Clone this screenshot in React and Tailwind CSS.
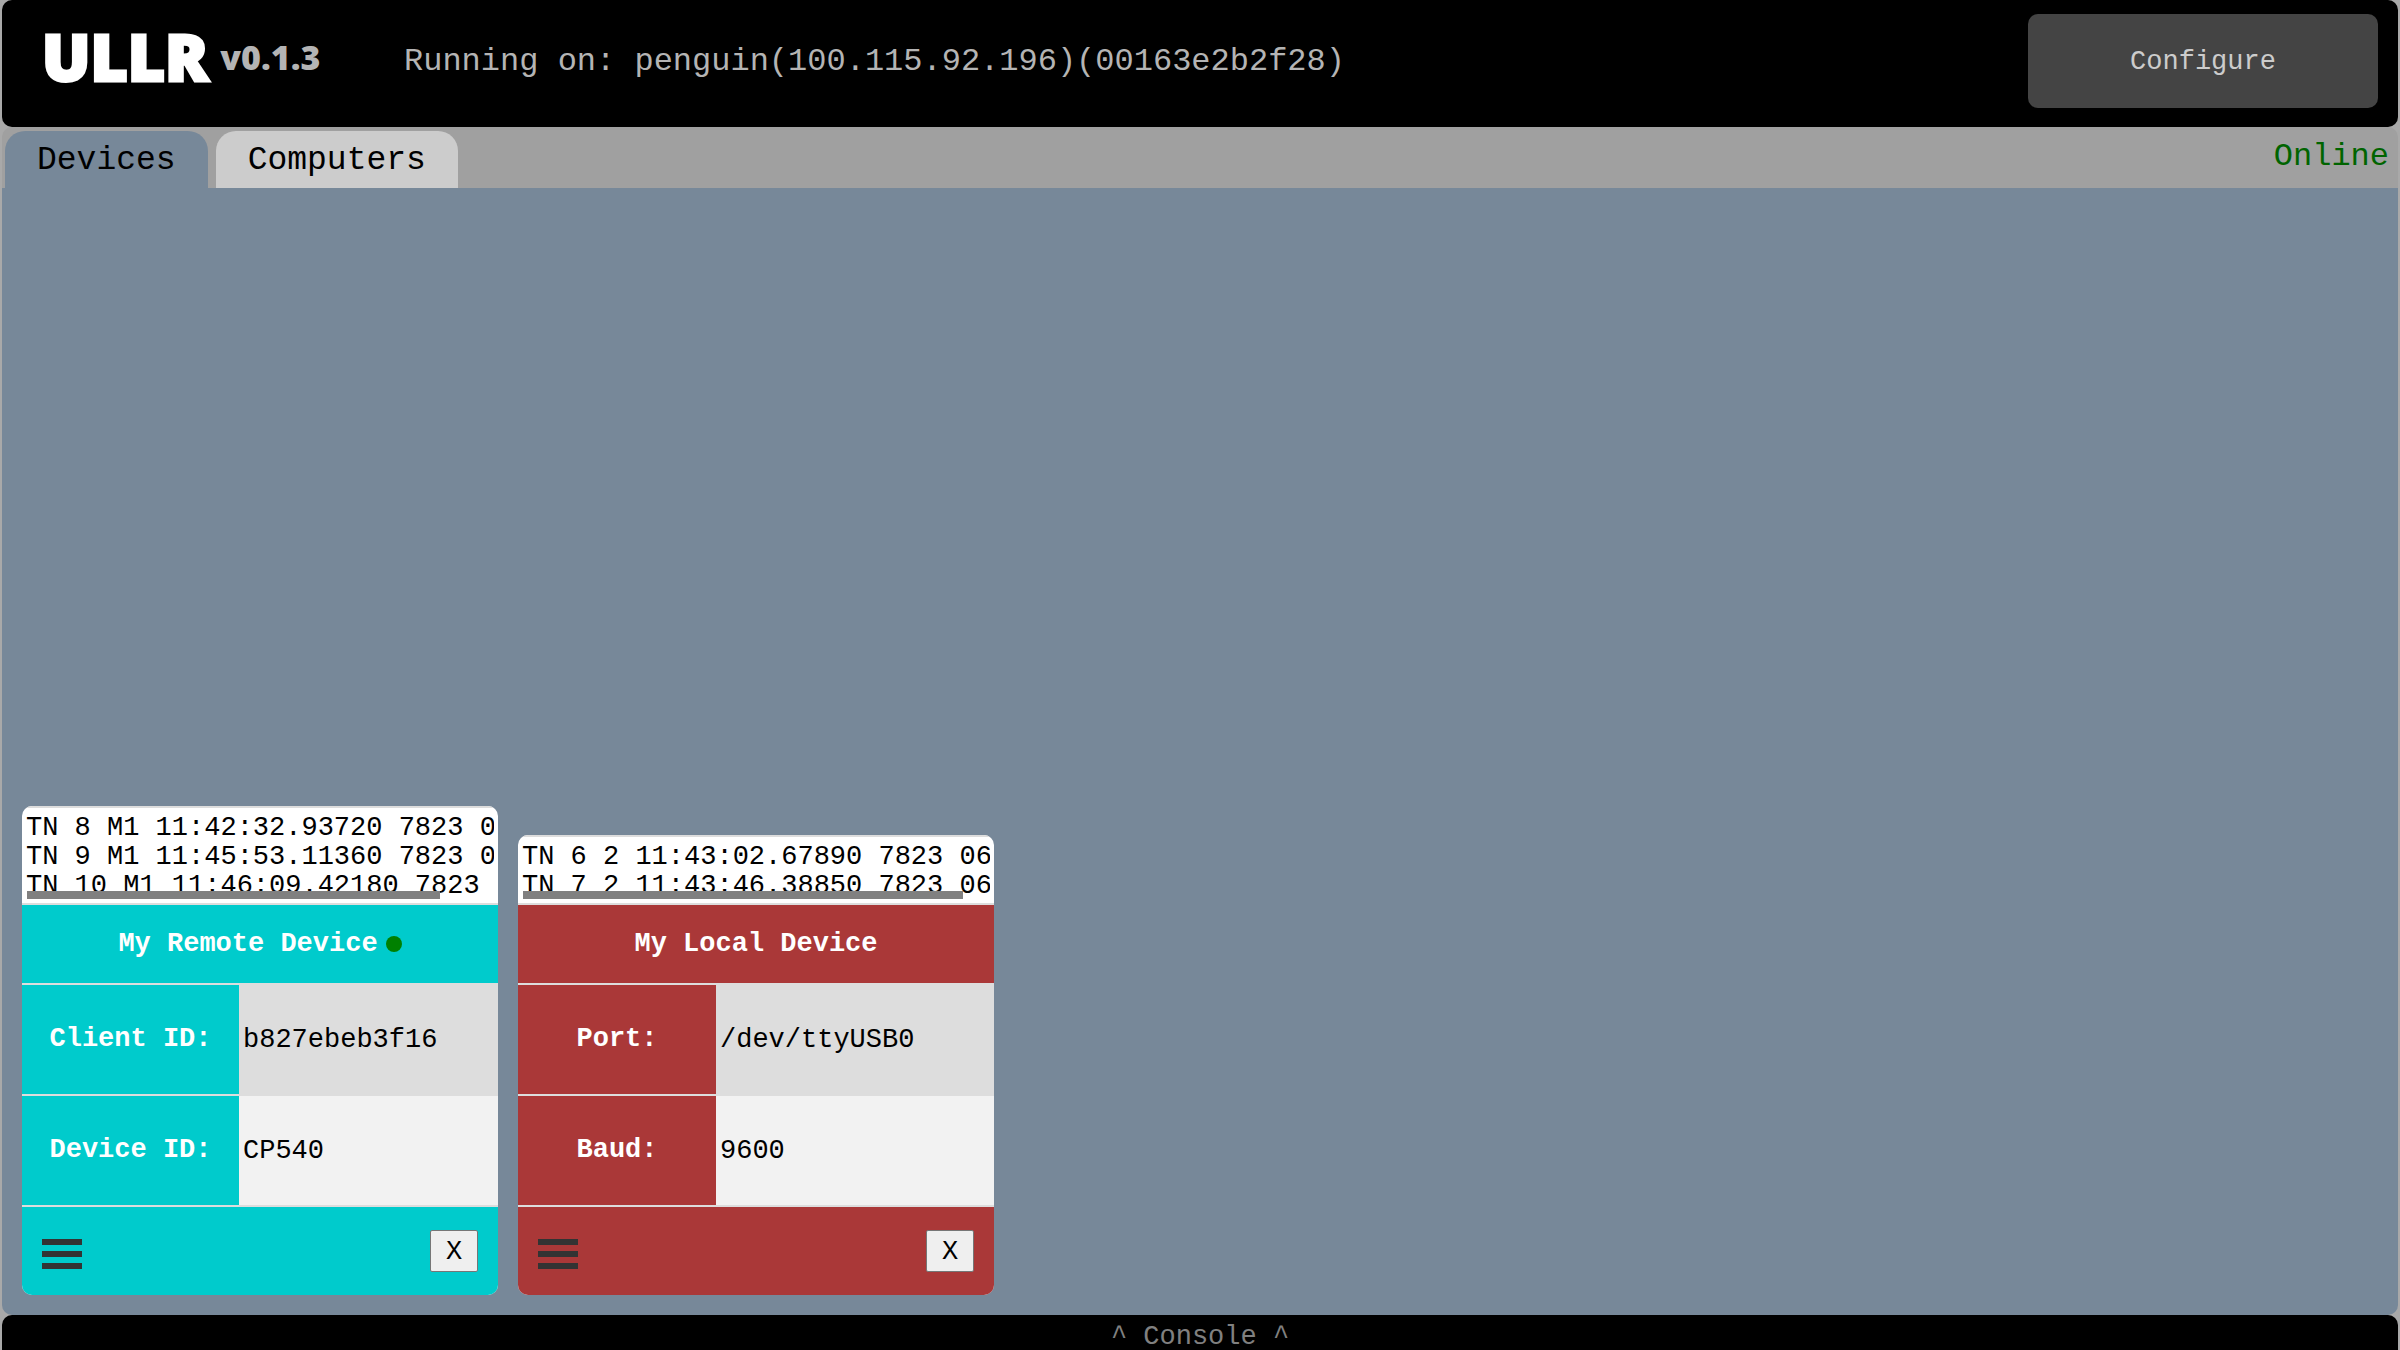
import { useState } from "react";

const devices = [
  {
    name: "My Remote Device",
    online: true,
    color: "bg-[#00cbcc]",
    labelWidth: "w-[217px]",
    thumb: "w-[413px]",
    output: [
      "TN 8 M1 11:42:32.93720 7823 06",
      "TN 9 M1 11:45:53.11360 7823 06",
      "TN 10 M1 11:46:09.42180 7823 0",
    ],
    fields: [
      { label: "Client ID:", value: "b827ebeb3f16" },
      { label: "Device ID:", value: "CP540" },
    ],
  },
  {
    name: "My Local Device",
    online: false,
    color: "bg-[#aa3838]",
    labelWidth: "w-[198px]",
    thumb: "w-[440px]",
    output: [
      "TN 6 2 11:43:02.67890 7823 06A",
      "TN 7 2 11:43:46.38850 7823 06A",
    ],
    fields: [
      { label: "Port:", value: "/dev/ttyUSB0" },
      { label: "Baud:", value: "9600" },
    ],
  },
];

function Header() {
  return (
    <header className="flex h-[127px] shrink-0 items-start justify-between rounded-[10px] bg-black">
      <div className="flex items-start">
        <h1 className="flex w-[360px] items-center gap-3 pt-[17px] pl-[40px] font-['Open_Sans',sans-serif] font-extrabold">
          <span className="text-[64px] leading-[80px] text-white [-webkit-text-stroke:3px_white]">
            ULLR
          </span>
          <span className="text-[34px] leading-[40px] text-[#b4b4b4]">v0.1.3</span>
        </h1>
        <p className="pt-[44px] pl-[42px] text-[32px] leading-[36px] text-[#b4b4b4]">
          Running on: penguin(100.115.92.196)(00163e2b2f28)
        </p>
      </div>
      <button
        type="button"
        className="mt-[14px] mr-5 h-[94px] w-[350px] rounded-[10px] bg-[#444444] pt-[2px] text-[27px] text-[#cccccc]"
      >
        Configure
      </button>
    </header>
  );
}

function Tab({ label, active, onClick }) {
  return (
    <button
      type="button"
      role="tab"
      aria-selected={active}
      onClick={onClick}
      className={`h-[57px] rounded-t-[20px] px-8 pt-[2px] text-[33px] text-black ${
        active ? "bg-[#778899]" : "bg-[#cccccc]"
      }`}
    >
      {label}
    </button>
  );
}

function DeviceCard({ device }) {
  return (
    <article className="w-[476px] overflow-hidden rounded-[10px] bg-white">
      {/* Last readings */}
      <div className="relative border-y-2 border-[#dddddd] pt-[6px] pr-1 pb-[2px] pl-1">
        <div className="overflow-hidden">
          {device.output.map((line) => (
            <p key={line} className="text-[27px] leading-[29px] whitespace-pre">
              {line}
            </p>
          ))}
        </div>
        <div className={`absolute bottom-1 left-[5px] h-2 bg-[#808080] ${device.thumb}`} />
      </div>

      <h2
        className={`flex h-[78px] items-center justify-center gap-2 text-[27px] font-bold text-white ${device.color}`}
      >
        {device.name}
        {device.online && <span className="size-4 rounded-full bg-[#008000]" />}
      </h2>

      <table className="w-full table-fixed border-separate border-spacing-0">
        <tbody>
          {device.fields.map((field) => (
            <tr
              key={field.label}
              className="h-[111px] text-[27px] odd:bg-[#dddddd] even:bg-[#f2f2f2]"
            >
              <th
                scope="row"
                className={`border-t-2 border-[#dddddd] font-bold text-white ${device.labelWidth} ${device.color}`}
              >
                {field.label}
              </th>
              <td className="border-t-2 border-[#dddddd] pt-[2px] pl-1">{field.value}</td>
            </tr>
          ))}
        </tbody>
      </table>

      <footer
        className={`flex h-[90px] items-start justify-between border-t-2 border-[#dddddd] px-5 ${device.color}`}
      >
        <button type="button" aria-label="Menu" className="mt-8 flex w-10 flex-col gap-[6px]">
          <span className="h-[6px] w-full bg-[#333333]" />
          <span className="h-[6px] w-full bg-[#333333]" />
          <span className="h-[6px] w-full bg-[#333333]" />
        </button>
        <button
          type="button"
          aria-label="Remove device"
          className="mt-[23px] h-[42px] w-12 rounded-[2px] border border-[#767676] bg-[#efefef] pt-[2px] text-[27px] leading-[30px] text-black"
        >
          X
        </button>
      </footer>
    </article>
  );
}

export default function App() {
  const [tab, setTab] = useState("Devices");

  return (
    <div className="flex h-screen flex-col overflow-hidden bg-[#a9a9a9] px-[2px] font-['Liberation_Mono',monospace]">
      <Header />

      <nav className="flex shrink-0 items-start justify-between rounded-t-[10px] bg-[#a0a0a0] pt-1 pr-[9px] pl-[3px]">
        <div role="tablist" className="flex gap-2">
          <Tab label="Devices" active={tab === "Devices"} onClick={() => setTab("Devices")} />
          <Tab label="Computers" active={tab === "Computers"} onClick={() => setTab("Computers")} />
        </div>
        <span className="pt-2 text-[32px] leading-[36px] text-[#006400]">Online</span>
      </nav>

      <main className="flex grow items-end gap-5 rounded-b-[10px] bg-[#778899] p-5">
        {tab === "Devices" &&
          devices.map((device) => <DeviceCard key={device.name} device={device} />)}
      </main>

      <button
        type="button"
        className="h-[35px] shrink-0 rounded-t-[10px] bg-black pt-[10px] text-[27px] leading-[25px] text-[#808080]"
      >
        ^ Console ^
      </button>
    </div>
  );
}
